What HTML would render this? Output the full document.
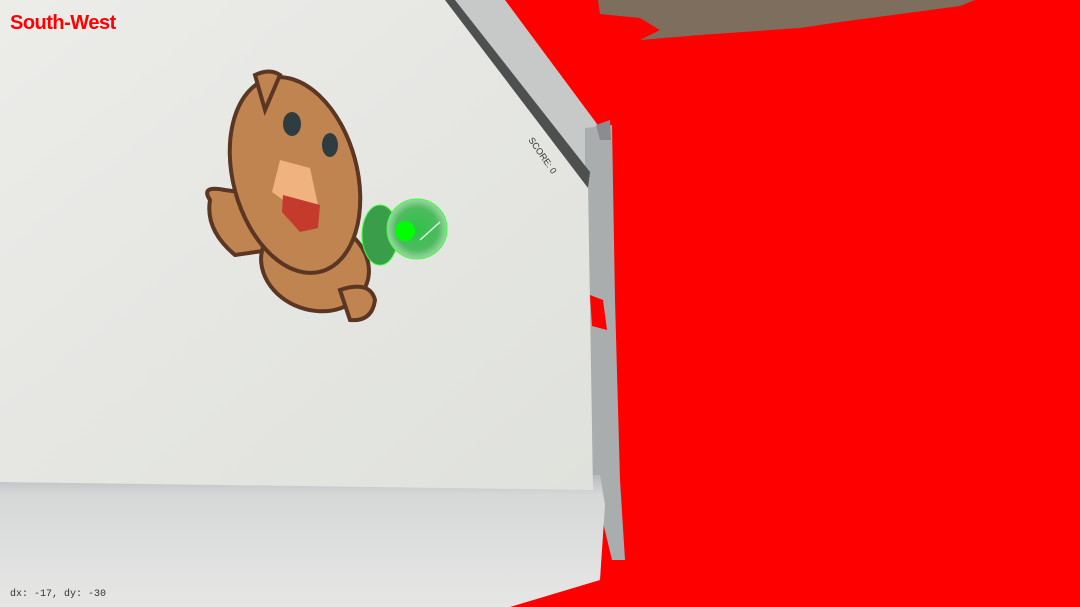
<!DOCTYPE html>
<html><head><style>
html,body{margin:0;padding:0;width:1080px;height:607px;overflow:hidden;background:#f00}
svg{position:absolute;left:0;top:0}
.t{position:absolute;font-family:"Liberation Sans",sans-serif}
</style></head><body>
<svg width="1080" height="607" viewBox="0 0 1080 607">
<defs>
<linearGradient id="scr" x1="0" y1="0" x2="1" y2="1">
<stop offset="0" stop-color="#ecece9"/><stop offset="1" stop-color="#dfe1dc"/></linearGradient>
<linearGradient id="bot" x1="0" y1="0" x2="0" y2="1">
<stop offset="0" stop-color="#b9bcbd"/><stop offset="0.15" stop-color="#d6d8d8"/><stop offset="1" stop-color="#e6e7e5"/></linearGradient>
<radialGradient id="g1" cx="0.5" cy="0.5" r="0.5"><stop offset="0" stop-color="#2fc24a"/><stop offset="0.7" stop-color="#4dbb5e"/><stop offset="1" stop-color="#9bd6a2"/></radialGradient>
</defs>
<rect x="0" y="0" width="1080" height="607" fill="#ff0000"/>
<!-- ceiling -->
<polygon points="598,0 600,14 640,18 660,30 640,40 700,35 800,28 840,22 900,14 960,6 975,0" fill="#7d6e5e"/>
<!-- bezel top -->
<polygon points="440,0 505,0 600,128 600,190 588,185" fill="#c7c9c9"/>
<!-- bezel right strip -->
<polygon points="585,128 612,125 615,300 620,480 625,560 612,560 600,510 585,495" fill="#a9adae"/>
<polygon points="596,125 610,120 611,140 600,140" fill="#8a8c8d"/>
<!-- bottom region -->
<polygon points="0,475 600,475 605,505 600,580 510,607 0,607" fill="url(#bot)"/>
<!-- screen -->
<polygon points="0,0 445,0 588,182 593,490 0,482" fill="url(#scr)"/>
<!-- dark border -->
<polygon points="445,0 455,0 590,172 588,188" fill="#4e5050"/>
<!-- notch -->
<polygon points="590,295 603,300 607,330 592,326" fill="#ff0000"/>
<!-- hamster -->
<g stroke="#5b3623" stroke-width="4" fill="#bf8450">
<path d="M210,200 Q200,185 225,190 L260,195 L270,250 L235,255 Q205,230 210,200 Z"/>
<ellipse cx="315" cy="265" rx="55" ry="45" transform="rotate(20 315 265)"/>
<path d="M340,290 Q370,280 375,300 Q372,322 350,320 Z"/>
<ellipse cx="295" cy="175" rx="62" ry="100" transform="rotate(-15 295 175)"/>
<path d="M255,75 Q270,68 280,75 L265,110 Z"/>
</g>
<path d="M280,160 L310,168 L318,205 L300,212 L272,192 Z" fill="#f0b27e"/>
<path d="M283,195 L320,205 L318,228 L300,232 L282,212 Z" fill="#c43a2d"/>
<ellipse cx="292" cy="124" rx="9" ry="12" fill="#2f3c40"/>
<ellipse cx="330" cy="145" rx="8" ry="12" fill="#2f3c40"/>
<!-- green -->
<ellipse cx="380" cy="235" rx="18" ry="30" fill="#3a9d4a" stroke="#3dff3d" stroke-width="1"/>
<circle cx="417" cy="229" r="30" fill="url(#g1)" stroke="#3dff3d" stroke-width="1"/>
<circle cx="405" cy="231" r="10" fill="#00ff00"/>
<line x1="420" y1="240" x2="440" y2="222" stroke="#d8f5d8" stroke-width="1.5"/>
<text x="528" y="140" font-family="Liberation Sans" font-size="9" fill="#333" transform="rotate(55 528 140)">SCORE: 0</text>
</svg>
<div class="t" style="left:10px;top:12px;font-size:20px;font-weight:bold;color:#f00;letter-spacing:-0.5px">South-West</div>
<div class="t" style="left:10px;top:589px;font-size:10px;color:#333;font-family:'Liberation Mono',monospace">dx: -17, dy: -30</div>
</body></html>
